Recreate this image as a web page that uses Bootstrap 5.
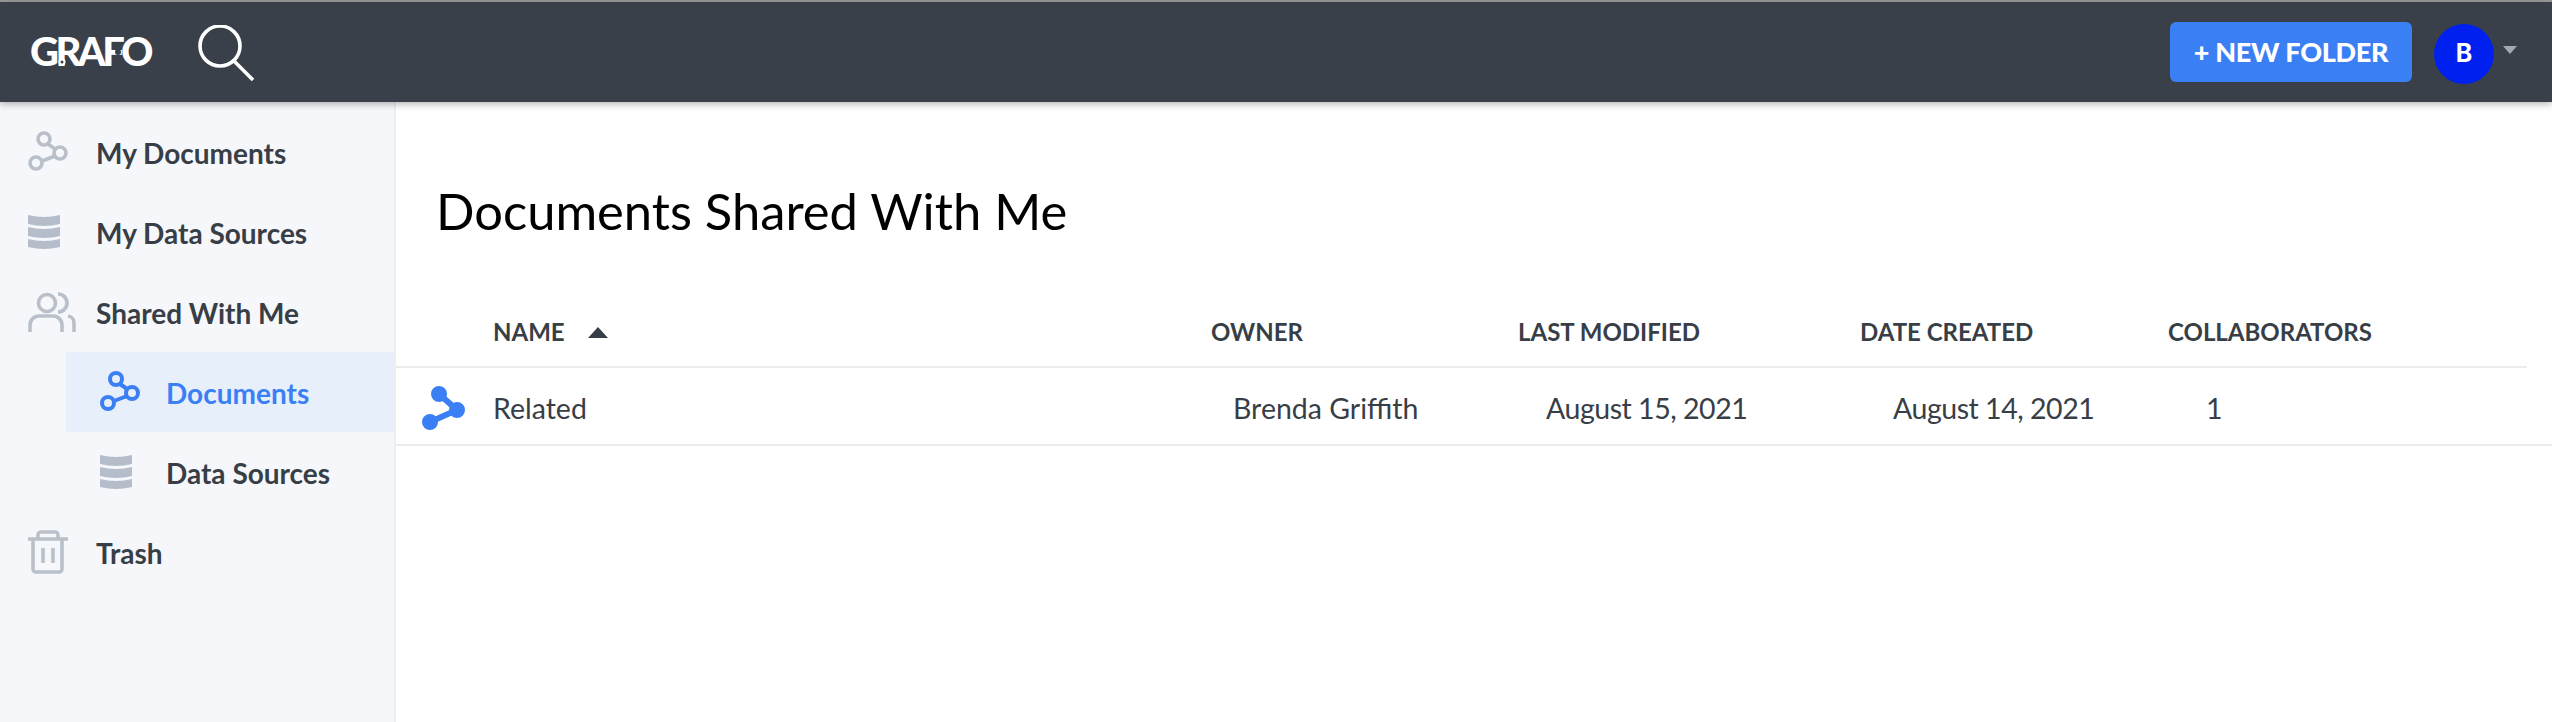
<!DOCTYPE html>
<html lang="en">
<head>
<meta charset="utf-8">
<title>Grafo</title>
<link href="https://cdn.jsdelivr.net/npm/bootstrap@5.3.0/dist/css/bootstrap.min.css" rel="stylesheet">
<style>
html, body { height: 100%; }
body { font-family: Lato, "Liberation Sans", sans-serif; color: #383e46; background: #fff; overflow: hidden; }
.app-shell { height: 722px; border-top: 2px solid #9a9a9a; }
.top-bar { height: 100px; background: #3a4049; box-shadow: 0 2px 7px rgba(0,0,0,.3); position: relative; z-index: 2; padding: 0 35px 0 30px; }
.logo-mark { position: relative; width: 120px; height: 30px; margin: -2px 48px 0 0; }
.logo-text { font-family: Lato, sans-serif; font-weight: 900; font-size: 40px; line-height: 30px; letter-spacing: -3.6px; color: #fff; display: block; }
.logo-dots { position: absolute; left: 0; top: 0; }
.search-glyph { display: block; margin-top: 4px; }
.folder-btn { width: 242px; height: 60px; background: #3b7ff5; border: 0; border-radius: 6px; color: #fff; font-family: Lato, sans-serif; font-weight: 900; font-size: 27px; letter-spacing: -.3px; padding: 0; margin-right: 22px; }
.folder-btn:hover { background: #3b7ff5; color: #fff; }
.user-dot { width: 60px; height: 60px; margin-top: 4px; border-radius: 50%; background: #0020f0; color: #fff; font-family: Inter, sans-serif; font-weight: 700; font-size: 25px; }
.user-caret { width: 0; height: 0; border-left: 7px solid transparent; border-right: 7px solid transparent; border-top: 8px solid #a3a8af; margin-left: 9px; margin-top: -4px; }
.side-rail { width: 396px; flex: none; background: #f5f7fb; border-right: 2px solid #eceef1; padding-top: 10px; }
.rail-item { height: 80px; padding-top: 2px; padding-left: 28px; font-size: 28px; font-weight: 700; color: #383e46; text-decoration: none; }
.rail-sub { margin-left: 66px; padding-left: 34px; }
.rail-on { background: #e7effb; color: #3b7ff5; }
.rail-icon { width: 48px; margin-top: -2px; margin-right: 20px; flex: none; display: block; }
.rail-sub .rail-icon { margin-right: 18px; }
.main-pane { min-width: 0; }
.page-title { font-family: Lato, sans-serif; font-weight: 400; font-size: 50.7px; line-height: 64px; color: #000; margin: 77px 0 53px 40px; }
.doc-table { table-layout: fixed; width: 100%; margin: 0; color: #383e46; }
.doc-table th, .doc-table td { padding: 0; background: transparent; vertical-align: middle; box-shadow: none; }
.doc-table th { height: 71px; padding-top: 2px; font-size: 24px; font-weight: 700; border-bottom: 2px solid #ececec; white-space: nowrap; }
.doc-table td { height: 78px; padding-top: 4px; font-size: 28.5px; font-weight: 400; border-bottom: 2px solid #ececec; }
.doc-table th.cell-end { border-bottom: 0; }
.w-icon { width: 97px; }
.w-name { width: 718px; }
.w-owner { width: 307px; }
.w-mod { width: 342px; }
.w-made { width: 308px; }
.w-col { width: 359px; }
.sort-up { display: inline-block; width: 0; height: 0; border-left: 10px solid transparent; border-right: 10px solid transparent; border-bottom: 11px solid #383e46; margin: 0 0 3px 23px; }
.doc-table td.pad-owner { padding-left: 22px; }
.doc-table td.pad-mod { padding-left: 28px; letter-spacing: -.47px; }
.doc-table td.pad-made { padding-left: 33px; letter-spacing: -.47px; }
.doc-table td.pad-col { padding-left: 38px; }
.row-icon { display: block; margin: 0 0 0 26px; }
</style>
</head>
<body>
<div class="app-shell d-flex flex-column">
  <header class="top-bar d-flex align-items-center flex-shrink-0">
    <div class="logo-mark">
      <span class="logo-text">GRAFO</span>
      <svg class="logo-dots" width="120" height="30" viewBox="0 0 120 30" aria-hidden="true"><circle cx="14" cy="15" r="2.5" fill="#3a4049"/><circle cx="32" cy="26" r="3.5" fill="#fff"/><circle cx="32" cy="26" r="1.5" fill="#3a4049"/><circle cx="88" cy="16" r="3" fill="#3a4049"/></svg>
    </div>
    <svg class="search-glyph" width="58" height="58" viewBox="0 0 58 58" fill="none" stroke="#fff" stroke-width="3.6" aria-hidden="true"><circle cx="22" cy="21" r="20"/><line x1="36" y1="36" x2="55" y2="55"/></svg>
    <div class="ms-auto d-flex align-items-center">
      <button class="btn folder-btn" type="button">+ NEW FOLDER</button>
      <div class="user-dot d-flex align-items-center justify-content-center">B</div>
      <span class="user-caret"></span>
    </div>
  </header>
  <div class="d-flex flex-grow-1">
    <nav class="side-rail">
      <a class="rail-item d-flex align-items-center" href="#">
        <svg class="rail-icon" height="42" viewBox="0 0 48 42" fill="none" stroke="#b9c0ca" stroke-width="3.6" aria-hidden="true"><circle cx="16" cy="8" r="6"/><circle cx="32" cy="22" r="6"/><circle cx="8" cy="32" r="6"/><path d="M20 13l7 5M27 25l-13 5"/></svg>
        My Documents</a>
      <a class="rail-item d-flex align-items-center" href="#">
        <svg class="rail-icon" height="36" viewBox="0 0 48 36" fill="#b4bdc9" aria-hidden="true"><path d="M0 1q16 4 32 0v9q-16 4-32 0zM0 13q16 4 32 0v9q-16 4-32 0zM0 25q16 4 32 0v8q-16 4-32 0z"/></svg>
        My Data Sources</a>
      <a class="rail-item d-flex align-items-center" href="#">
        <svg class="rail-icon" height="42" viewBox="0 0 48 42" fill="none" stroke="#b9c0ca" stroke-width="3.6" aria-hidden="true"><circle cx="19" cy="12" r="8.5"/><path d="M30 3a9 9 0 0 1 0 18M2 41v-7a9 9 0 0 1 9-9h14a9 9 0 0 1 9 9v7M40 25a7 7 0 0 1 6 7v9"/></svg>
        Shared With Me</a>
      <a class="rail-item rail-sub rail-on d-flex align-items-center" href="#">
        <svg class="rail-icon" height="42" viewBox="0 0 48 42" fill="none" stroke="#3b7ff5" stroke-width="4" aria-hidden="true"><circle cx="16" cy="8" r="6"/><circle cx="32" cy="22" r="6"/><circle cx="8" cy="32" r="6"/><path d="M20 13l7 5M27 25l-13 5"/></svg>
        Documents</a>
      <a class="rail-item rail-sub d-flex align-items-center" href="#">
        <svg class="rail-icon" height="36" viewBox="0 0 48 36" fill="#b4bdc9" aria-hidden="true"><path d="M0 1q16 4 32 0v9q-16 4-32 0zM0 13q16 4 32 0v9q-16 4-32 0zM0 25q16 4 32 0v8q-16 4-32 0z"/></svg>
        Data Sources</a>
      <a class="rail-item d-flex align-items-center" href="#">
        <svg class="rail-icon" height="44" viewBox="0 0 48 44" fill="none" stroke="#b9c0ca" stroke-width="3.6" aria-hidden="true"><path d="M0 9h40M5 9v30a3 3 0 0 0 3 3h23a3 3 0 0 0 3-3V9M10 9V5a3 3 0 0 1 3-3h14a3 3 0 0 1 3 3v4M15 18v15M25 18v15"/></svg>
        Trash</a>
    </nav>
    <main class="main-pane flex-grow-1">
      <h1 class="page-title">Documents Shared With Me</h1>
      <table class="table doc-table">
        <colgroup><col class="w-icon"><col class="w-name"><col class="w-owner"><col class="w-mod"><col class="w-made"><col class="w-col"><col></colgroup>
        <thead>
          <tr><th></th><th>NAME<span class="sort-up"></span></th><th>OWNER</th><th>LAST MODIFIED</th><th>DATE CREATED</th><th>COLLABORATORS</th><th class="cell-end"></th></tr>
        </thead>
        <tbody>
          <tr>
            <td><svg class="row-icon" width="44" height="44" viewBox="0 0 44 44" fill="#3b7ff5" stroke="#3b7ff5" stroke-width="4" aria-hidden="true"><circle cx="17" cy="8" r="6"/><circle cx="35" cy="24" r="6"/><circle cx="8" cy="36" r="6"/><path d="M17 8l18 16L8 36" fill="none" stroke-width="6"/></svg></td>
            <td>Related</td>
            <td class="pad-owner">Brenda Griffith</td>
            <td class="pad-mod">August 15, 2021</td>
            <td class="pad-made">August 14, 2021</td>
            <td class="pad-col">1</td>
            <td></td>
          </tr>
        </tbody>
      </table>
    </main>
  </div>
</div>
<script src="https://cdn.jsdelivr.net/npm/bootstrap@5.3.0/dist/js/bootstrap.bundle.min.js"></script>
</body>
</html>
